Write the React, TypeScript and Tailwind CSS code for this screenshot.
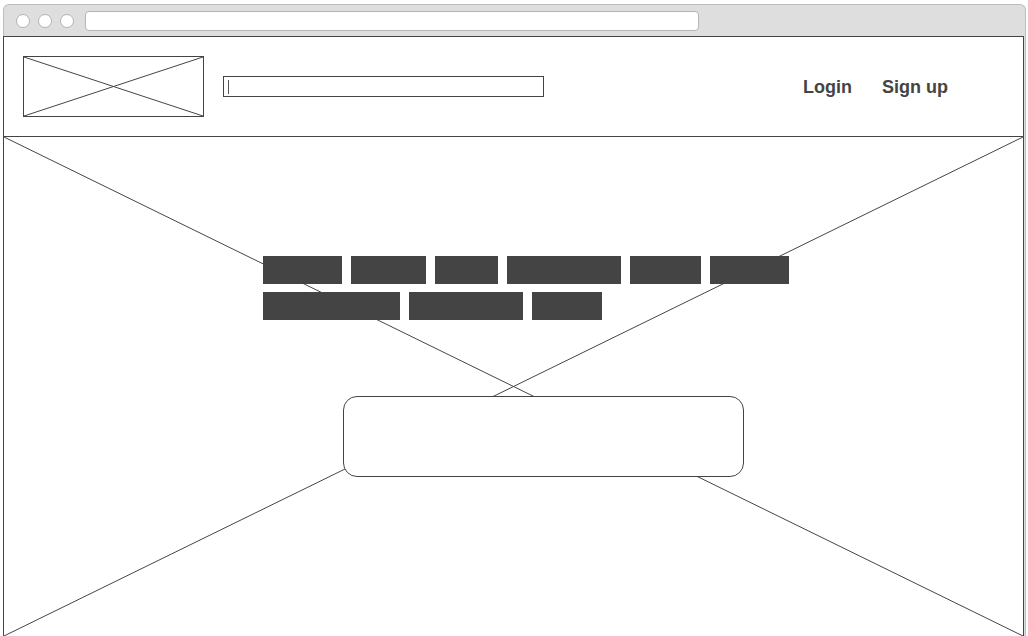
const tags = [
  ["w-[79px]", "w-[75px]", "w-[63px]", "w-[114px]", "w-[71px]", "w-[79px]"],
  ["w-[137px]", "w-[114px]", "w-[70px]"],
];

function CrossBox({ className }: { className?: string }) {
  return (
    <svg className={className} preserveAspectRatio="none" viewBox="0 0 100 100">
      <line x1="0" y1="0" x2="100" y2="100" stroke="#444" strokeWidth="1" vectorEffect="non-scaling-stroke" />
      <line x1="100" y1="0" x2="0" y2="100" stroke="#444" strokeWidth="1" vectorEffect="non-scaling-stroke" />
    </svg>
  );
}

export default function App() {
  return (
    <div className="w-[1028px] h-[636px] overflow-hidden bg-white pl-[3px] pt-[4px] font-['Liberation_Sans',Arial,sans-serif]">
      <div className="w-[1023px] rounded-t-[6px] border-x border-t border-[#bdbdbd] bg-[#dedede]">
        {/* title bar */}
        <div className="h-[31px] flex items-center pl-[12px]">
          <div className="flex gap-[8px]">
            <span className="w-[14px] h-[14px] rounded-full bg-white border border-[#b3b3b3]" />
            <span className="w-[14px] h-[14px] rounded-full bg-white border border-[#b3b3b3]" />
            <span className="w-[14px] h-[14px] rounded-full bg-white border border-[#b3b3b3]" />
          </div>
          <div className="ml-[11px] w-[614px] h-[20px] rounded-[4px] bg-white border border-[#b5b5b5]" />
        </div>

        {/* page */}
        <div className="-ml-px w-[1021px] h-[600px] bg-white border-x border-t border-[#444] flex flex-col">
          <header className="h-[100px] shrink-0 border-b border-[#444] flex items-center pl-[19px] pr-[75px]">
            <div className="w-[181px] h-[61px] border border-[#444]">
              <CrossBox className="w-full h-full block" />
            </div>
            <div className="ml-[19px] w-[321px] h-[21px] border border-[#444] flex items-center pl-[4px]">
              <span className="w-px h-[14px] bg-[#555]" />
            </div>
            <nav className="ml-auto flex items-center gap-[30px] text-[18px] font-bold text-[#444] pt-[2px]">
              <span>Login</span>
              <span>Sign up</span>
            </nav>
          </header>

          <section className="relative flex-1">
            <CrossBox className="absolute inset-0 w-full h-full" />
            <div className="relative flex flex-col pl-[259px] pt-[119px]">
              <div className="w-[540px] flex flex-col gap-[8px]">
                {tags.map((row, i) => (
                  <div key={i} className="flex gap-[9px]">
                    {row.map((w, j) => (
                      <span key={j} className={`${w} h-[28px] bg-[#444]`} />
                    ))}
                  </div>
                ))}
              </div>
              <div className="ml-[80px] mt-[76px] w-[401px] h-[81px] rounded-[14px] border border-[#444] bg-white" />
            </div>
          </section>
        </div>
      </div>
    </div>
  );
}
